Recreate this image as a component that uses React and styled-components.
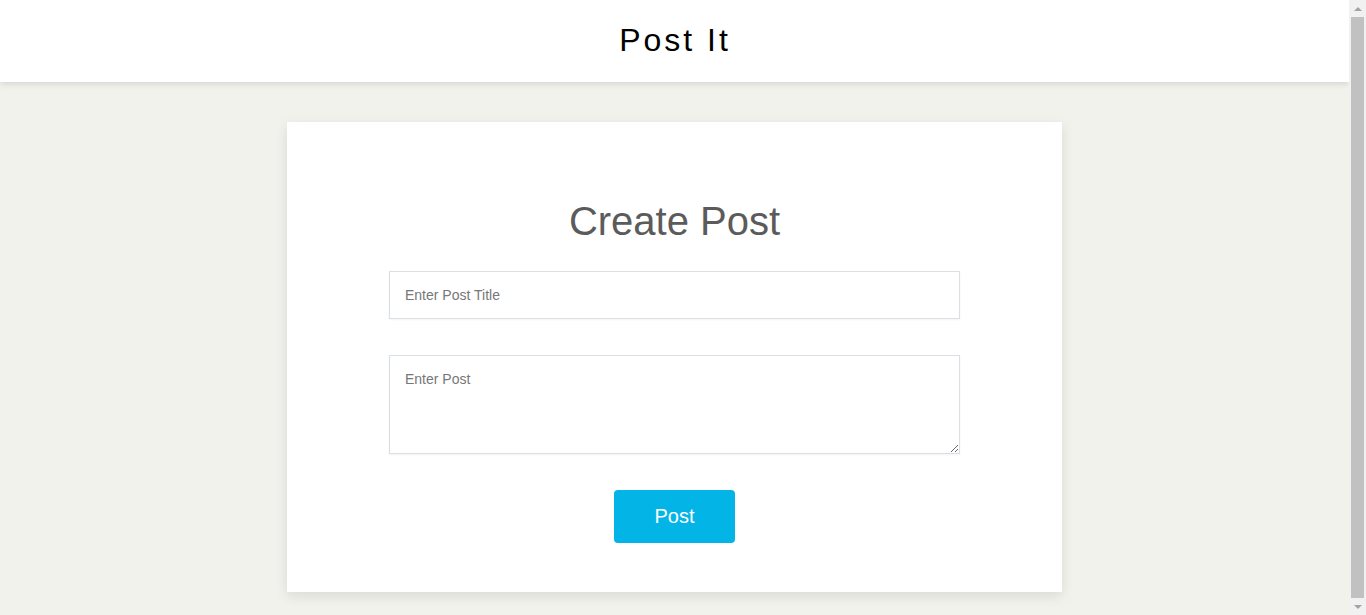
import styled, { createGlobalStyle } from "styled-components";

const GlobalStyle = createGlobalStyle`
  html, body {
    margin: 0;
    padding: 0;
    background-color: #f2f2ed;
    font-family: "Liberation Sans", Arial, sans-serif;
  }
  * {
    box-sizing: border-box;
  }
`;

const Page = styled.div`
  margin-right: 17px;
`;

const Header = styled.header`
  height: 82px;
  background-color: #fff;
  box-shadow: 0 2px 6px rgba(0, 0, 0, 0.12);
  display: flex;
  align-items: center;
  justify-content: center;
  position: relative;
  z-index: 1;
  h1 {
    margin: -2px 0 0 1px;
    font-size: 32px;
    font-weight: normal;
    letter-spacing: 3px;
    color: #000;
  }
`;

const Main = styled.main`
  padding: 40px 0 40px;
  display: flex;
  justify-content: center;
`;

const Card = styled.section`
  width: 775px;
  background-color: #fff;
  box-shadow: 0 4px 12px rgba(0, 0, 0, 0.1);
  padding: 76px 102px 49px;
  display: flex;
  flex-direction: column;
  align-items: stretch;
  .card__title {
    margin: 0 0 27px;
    text-align: center;
    font-size: 40px;
    line-height: 46px;
    font-weight: normal;
    color: #5b5b5b;
  }
`;

const Field = styled.input`
  display: block;
  width: 100%;
  height: 48px;
  padding: 0 15px;
  border: 1px solid #dadfe5;
  box-shadow: 0 1px 2px rgba(0, 0, 0, 0.05);
  font-family: "Liberation Sans", Arial, sans-serif;
  font-size: 14px;
  color: #333;
  outline: none;
  margin-bottom: 36px;
  &::placeholder {
    color: #777;
  }
`;

const TextArea = styled.textarea`
  display: block;
  width: 100%;
  height: 99px;
  padding: 15px;
  border: 1px solid #dadfe5;
  box-shadow: 0 1px 2px rgba(0, 0, 0, 0.05);
  font-family: "Liberation Sans", Arial, sans-serif;
  font-size: 14px;
  color: #333;
  outline: none;
  margin: 0 0 36px;
  &::placeholder {
    color: #777;
  }
`;

const Button = styled.button`
  align-self: center;
  width: 121px;
  height: 53px;
  border: none;
  border-radius: 4px;
  background-color: #03b5e6;
  color: #fff;
  font-family: "Liberation Sans", Arial, sans-serif;
  font-size: 20px;
  cursor: pointer;
`;

// browser scrollbar look-alike on the right edge
const ScrollBar = styled.div`
  position: fixed;
  top: 0;
  right: 0;
  width: 17px;
  height: 100vh;
  background-color: #f1f1f1;
  display: flex;
  flex-direction: column;
  z-index: 10;
`;

const ScrollArrow = styled.div`
  height: 17px;
  flex: none;
  display: flex;
  align-items: center;
  justify-content: center;
  &::after {
    content: "";
    width: 0;
    height: 0;
    border-left: 4px solid transparent;
    border-right: 4px solid transparent;
    ${({ $down }) =>
      $down
        ? "border-top: 4px solid #a3a3a3;"
        : "border-bottom: 4px solid #a3a3a3;"}
  }
`;

const ScrollThumb = styled.div`
  flex: 1;
  margin: 0 2px;
  background-color: #c1c1c1;
`;

const App = () => {
  return (
    <>
      <GlobalStyle />
      <Page>
        <Header>
          <h1>Post It</h1>
        </Header>
        <Main>
          <Card>
            <h2 className="card__title">Create Post</h2>
            <Field type="text" placeholder="Enter Post Title" />
            <TextArea placeholder="Enter Post" />
            <Button type="button">Post</Button>
          </Card>
        </Main>
      </Page>
      <ScrollBar>
        <ScrollArrow />
        <ScrollThumb />
        <ScrollArrow $down />
      </ScrollBar>
    </>
  );
};

export default App;
